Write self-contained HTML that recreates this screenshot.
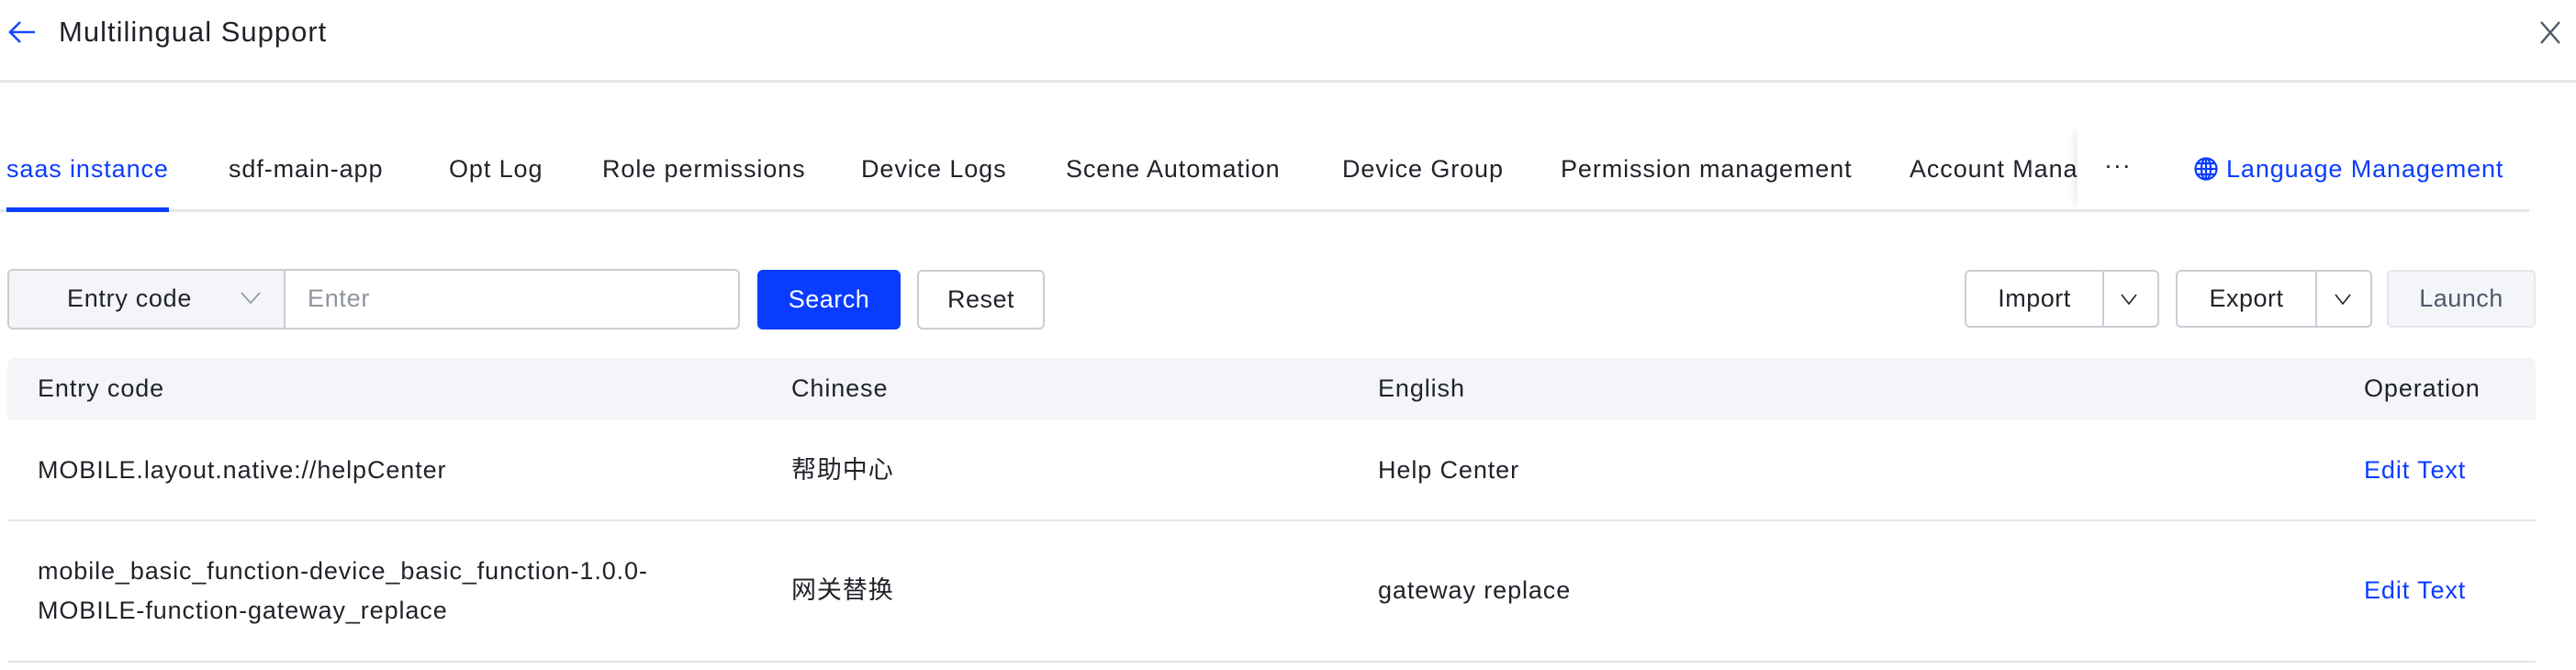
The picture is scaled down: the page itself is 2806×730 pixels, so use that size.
<!DOCTYPE html>
<html><head><meta charset="utf-8"><style>
*{box-sizing:border-box;margin:0;padding:0}
body{width:2806px;height:730px;background:#fff;font-family:"Liberation Sans","Noto Sans CJK SC",sans-serif;color:#1f2329;position:relative;overflow:hidden}
.a{position:absolute;white-space:nowrap}
.tab{position:absolute;top:166px;font-size:27px;line-height:36px;color:#1f2329;letter-spacing:0.9px}
.td{position:absolute;font-size:27px;line-height:43px;color:#1f2329;letter-spacing:0.9px}
.btn{position:absolute;border:2px solid #c9cdd4;border-radius:6px;font-size:27px;display:flex;align-items:center;justify-content:center;background:#fff;letter-spacing:0.5px}
</style></head><body>
<svg class="a" style="left:8px;top:22px" width="32" height="26" viewBox="0 0 32 26"><path d="M30 13H4M14 2L3 13l11 11" fill="none" stroke="#1649ff" stroke-width="2.6"/></svg>
<div class="a" style="left:64px;top:15px;font-size:31px;line-height:40px;color:#1f2329;letter-spacing:1px">Multilingual Support</div>
<svg class="a" style="left:2766px;top:23px" width="24" height="25" viewBox="0 0 24 25"><path d="M2 1l20 23M22 1L2 24" stroke="#4e5969" stroke-width="2.4"/></svg>
<div class="a" style="left:0;top:87px;width:2806px;height:3px;background:#e5e6eb"></div>

<div class="a" style="left:0;top:228px;width:2755px;height:3px;background:#e5e6eb"></div>
<div class="tab" style="left:7px;color:#0a3cff">saas instance</div>
<div class="a" style="left:7px;top:226px;width:177px;height:5px;background:#0a3cff"></div>
<div class="tab" style="left:249px">sdf-main-app</div>
<div class="tab" style="left:489px">Opt Log</div>
<div class="tab" style="left:656px">Role permissions</div>
<div class="tab" style="left:938px">Device Logs</div>
<div class="tab" style="left:1161px">Scene Automation</div>
<div class="tab" style="left:1462px">Device Group</div>
<div class="tab" style="left:1700px">Permission management</div>
<div class="tab" style="left:2080px">Account Management</div>
<div class="a" style="left:2263px;top:138px;width:543px;height:90px;background:#fff;box-shadow:-10px 0 8px -6px rgba(0,0,0,0.08)"></div>
<div class="a" style="left:2263px;top:228px;width:492px;height:3px;background:#e5e6eb"></div>
<div class="tab" style="left:2292px;top:162px">···</div>
<svg class="a" style="left:2389px;top:171px" width="28" height="26" viewBox="0 0 28 26"><g fill="none" stroke="#0a3cff" stroke-width="2.2"><circle cx="14" cy="13" r="11.5"/><ellipse cx="14" cy="13" rx="5" ry="11.5"/><path d="M14 1.5v23M2.5 13h23M4 7h20M4 19h20"/></g></svg>
<div class="tab" style="left:2425px;color:#0a3cff">Language Management</div>

<div class="a" style="left:8px;top:293px;width:798px;height:66px;border:2px solid #c9cdd4;border-radius:6px;background:#fff"></div>
<div class="a" style="left:10px;top:295px;width:301px;height:62px;background:#f4f5f9;border-right:2px solid #c9cdd4;border-radius:4px 0 0 4px"></div>
<div class="a" style="left:73px;top:308px;font-size:27px;line-height:34px;letter-spacing:0.7px">Entry code</div>
<svg class="a" style="left:262px;top:318px" width="22" height="13" viewBox="0 0 22 13"><path d="M1 1l10 11L21 1" fill="none" stroke="#86909c" stroke-width="1.6"/></svg>
<div class="a" style="left:335px;top:308px;font-size:27px;line-height:34px;color:#8f959e;letter-spacing:0.7px">Enter</div>
<div class="btn" style="left:825px;top:294px;width:156px;height:65px;background:#0a3cff;border-color:#0a3cff;color:#fff">Search</div>
<div class="btn" style="left:999px;top:294px;width:139px;height:65px">Reset</div>

<div class="btn" style="left:2140px;top:294px;width:212px;height:63px;justify-content:flex-start"><span style="width:148px;text-align:center">Import</span><span style="position:absolute;left:148px;top:0;bottom:0;width:2px;background:#c9cdd4"></span>
<svg style="position:absolute;left:168px;top:24px" width="18" height="12" viewBox="0 0 18 12"><path d="M1 1l8 10 8-10" fill="none" stroke="#1f2329" stroke-width="1.6"/></svg></div>
<div class="btn" style="left:2370px;top:294px;width:214px;height:63px;justify-content:flex-start"><span style="width:150px;text-align:center">Export</span><span style="position:absolute;left:150px;top:0;bottom:0;width:2px;background:#c9cdd4"></span>
<svg style="position:absolute;left:171px;top:24px" width="18" height="12" viewBox="0 0 18 12"><path d="M1 1l8 10 8-10" fill="none" stroke="#1f2329" stroke-width="1.6"/></svg></div>
<div class="btn" style="left:2600px;top:294px;width:162px;height:63px;background:#f4f5f9;border-color:#e5e6eb;color:#4e5969">Launch</div>

<div class="a" style="left:8px;top:390px;width:2754px;height:68px;background:#f4f5f9;border-radius:8px 8px 0 0"></div>
<div class="td" style="left:41px;top:402px">Entry code</div>
<div class="td" style="left:862px;top:402px">Chinese</div>
<div class="td" style="left:1501px;top:402px">English</div>
<div class="td" style="left:2575px;top:402px">Operation</div>

<div class="td" style="left:41px;top:491px">MOBILE.layout.native://helpCenter</div>
<div class="td" style="left:862px;top:491px">帮助中心</div>
<div class="td" style="left:1501px;top:491px">Help Center</div>
<div class="td" style="left:2575px;top:491px;color:#0a3cff">Edit Text</div>
<div class="a" style="left:8px;top:566px;width:2754px;height:2px;background:#e5e6eb"></div>

<div class="td" style="left:41px;top:601px">mobile_basic_function-device_basic_function-1.0.0-<br>MOBILE-function-gateway_replace</div>
<div class="td" style="left:862px;top:622px">网关替换</div>
<div class="td" style="left:1501px;top:622px">gateway replace</div>
<div class="td" style="left:2575px;top:622px;color:#0a3cff">Edit Text</div>
<div class="a" style="left:8px;top:720px;width:2754px;height:2px;background:#e5e6eb"></div>
</body></html>
